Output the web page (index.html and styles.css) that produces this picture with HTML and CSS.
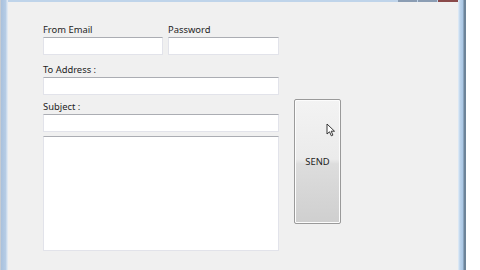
FILE: index.html
```html
<!DOCTYPE html>
<html>
<head>
<meta charset="utf-8">
<link rel="stylesheet" href="styles.css">
</head>
<body>
<div class="frame">
  <div class="caption-buttons">
    <span class="cap cap-min"></span>
    <span class="cap cap-max"></span>
    <span class="cap cap-close"></span>
  </div>
  <div class="client">
    <div class="form">
      <div class="row two">
        <div class="field f-email">
          <label class="lbl">From Email</label>
          <input class="box" type="text">
        </div>
        <div class="field f-pass">
          <label class="lbl">Password</label>
          <input class="box" type="password">
        </div>
      </div>
      <div class="field f-to">
        <label class="lbl">To Address :</label>
        <input class="box" type="text">
      </div>
      <div class="field f-subj">
        <label class="lbl">Subject :</label>
        <input class="box" type="text">
      </div>
      <textarea class="body-box"></textarea>
    </div>
    <div class="send-col">
      <button class="send">SEND</button>
    </div>
  </div>
  <svg class="cursor" width="10" height="14" viewBox="0 0 10 14">
    <path d="M1 1 L1 11 L3.5 8.8 L5.3 12.8 L6.9 12.1 L5.2 8.2 L8.5 8.2 Z" fill="#fff" stroke="#222" stroke-width="0.9" stroke-linejoin="round"/>
  </svg>
</div>
</body>
</html>
```

FILE: styles.css
```css
html, body {
  margin: 0;
  padding: 0;
  background: #ffffff;
}
body {
  width: 480px;
  height: 270px;
  overflow: hidden;
  font-family: "Noto Sans", "Open Sans", sans-serif;
}
.frame {
  position: relative;
  width: 466px;
  height: 270px;
  box-sizing: border-box;
  padding: 2px 8px 0 8px;
  background: linear-gradient(to right,
    #c7ccd3 0, #c7ccd3 1px,
    #a9c1dd 1px, #b7cde6 6px, #dfe8f2 7px, #dfe8f2 8px,
    transparent 8px, transparent 458px,
    #e4eef8 458px, #bcd4ec 460px, #a9c6e3 463px, #6d8499 464px, #6d8499 466px);
}
.frame::before {
  content: "";
  position: absolute;
  left: 8px;
  right: 8px;
  top: 0;
  height: 2px;
  background: #bfd4ea;
}
.caption-buttons {
  position: absolute;
  top: 0;
  left: 398px;
  display: flex;
  gap: 1px;
  height: 2px;
}
.cap {
  display: block;
  height: 2px;
}
.cap-min { width: 19px; background: #8b9db3; }
.cap-max { width: 19px; background: #8b9db3; }
.cap-close { width: 20px; background: #8a4a4a; }
.client {
  height: 268px;
  background: #f0f0f0;
  box-sizing: border-box;
  padding: 21px 0 0 35px;
  display: flex;
  gap: 15px;
}
.form {
  width: 236px;
  display: flex;
  flex-direction: column;
}
.row.two {
  display: flex;
  gap: 5px;
}
.f-email { width: 120px; }
.f-pass { width: 111px; }
.field {
  display: flex;
  flex-direction: column;
}
.lbl {
  font-size: 9.4px;
  line-height: 14px;
  color: #1e1e1e;
  height: 14px;
}
.box {
  display: block;
  margin: 0 0 8px 0;
  height: 18px;
  box-sizing: border-box;
  border: 1px solid #e2e3ea;
  border-top-color: #abadb3;
  background: #ffffff;
  padding: 0;
  outline: none;
  width: 100%;
}
.f-to .box { margin-bottom: 5px; }
.f-subj .box { margin-bottom: 4px; }
.body-box {
  display: block;
  width: 236px;
  height: 115px;
  margin: 0;
  box-sizing: border-box;
  border: 1px solid #e2e3ea;
  border-top-color: #abadb3;
  background: #ffffff;
  resize: none;
  outline: none;
  padding: 0;
}
.send-col {
  padding-top: 76px;
}
.send {
  display: block;
  width: 47px;
  height: 125px;
  box-sizing: border-box;
  border: 1px solid #9a9a9a;
  border-radius: 2px;
  background: linear-gradient(to bottom, #f3f3f3 0%, #ebebeb 48%, #dddddd 52%, #cfcfcf 100%);
  box-shadow: inset 0 0 0 1px #fcfcfc;
  font-family: "Noto Sans", "Open Sans", sans-serif;
  font-size: 9.4px;
  color: #1e1e1e;
  padding: 0;
}
.cursor {
  position: absolute;
  left: 326px;
  top: 123px;
}
```
